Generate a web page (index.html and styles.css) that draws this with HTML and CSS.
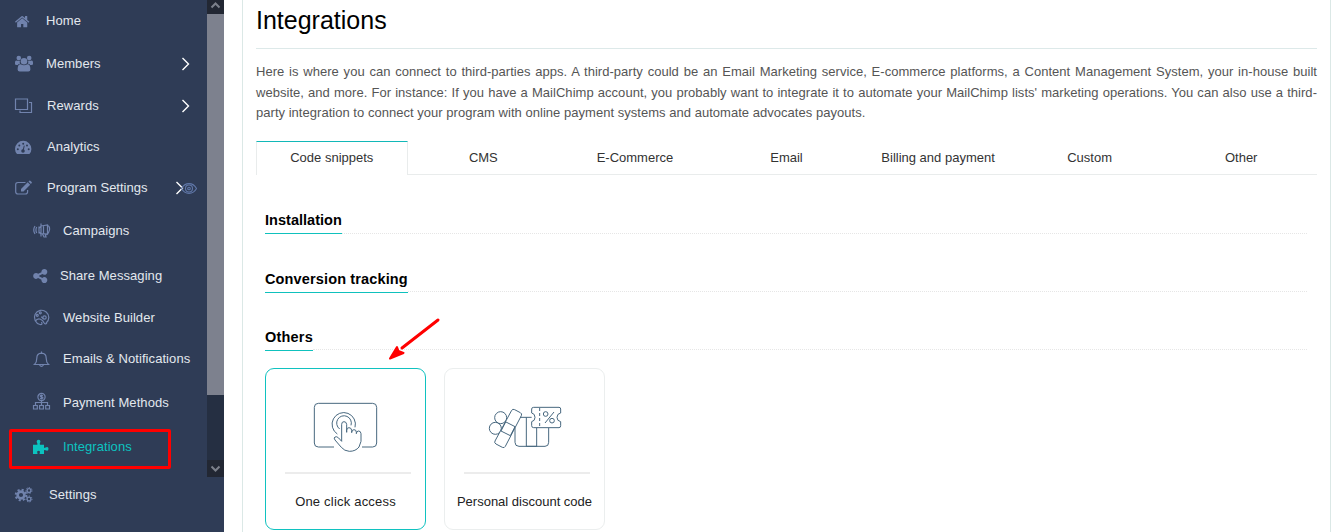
FILE: index.html
```html
<!DOCTYPE html>
<html lang="en">
<head>
<meta charset="utf-8">
<title>Integrations</title>
<link rel="stylesheet" href="styles.css">
</head>
<body>
<div class="app">
  <aside class="sidebar">
    <nav class="nav">
      <a class="item"><svg class="icon solid" viewBox="0 0 20 20"><path transform="translate(.3 2.8) scale(.0088)" d="M1472 992v480q0 26-19 45t-45 19h-384v-384h-256v384h-384q-26 0-45-19t-19-45v-480q0-1 .5-3t.5-3l575-474 575 474q1 2 1 6zm223-69l-62 74q-8 9-21 11h-3q-13 0-21-7l-692-577-692 577q-12 8-24 7-13-2-21-11l-62-74q-8-10-7-23.5t11-21.5l719-599q32-26 76-26t76 26l244 204v-195q0-14 9-23t23-9h192q14 0 23 9t9 23v408l219 182q10 8 11 21.5t-7 23.5z"/></svg><span class="label">Home</span></a>
      <a class="item"><svg class="icon solid" viewBox="0 0 20 20"><circle cx="4.8" cy="5" r="2.3"/><circle cx="15.2" cy="5" r="2.3"/><path d="M1 11V9.500Q1 7.200 3 7.700h3Q5.200 9 6.200 10.800 4.500 10.700 3.800 12H2.500Q1 12 1 11zM19 11V9.500Q19 7.200 17 7.700h-3q.8 1.300-.2 3.100 1.700-.1 2.400 1.200h1.300Q19 12 19 11z"/><circle cx="10" cy="8.200" r="3.300"/><path d="M3.600 16.500q0-5.200 3-5.200 3.400 1.800 6.800 0 3 0 3 5.200 0 2-2 2H5.600q-2 0-2-2z"/></svg><span class="label">Members</span><svg class="chevron" viewBox="0 0 10 14"><path d="M1.500 1 7.500 7l-6 6"/></svg></a>
      <a class="item late"><svg class="icon line" viewBox="0 0 20 20"><path d="M1.500 4h12v10.500h-12zM15 7.500h2.500v10H6V15.500"/></svg><span class="label">Rewards</span><svg class="chevron" viewBox="0 0 10 14"><path d="M1.500 1 7.500 7l-6 6"/></svg></a>
      <a class="item late"><svg class="icon solid" viewBox="0 0 20 20"><path d="M3 18Q1 16 1 13a8.200 8.200 0 0 1 16.400 0q0 3-2 5z"/><g class="cut"><circle cx="3.800" cy="13.300" r="1"/><circle cx="5.300" cy="9.500" r="1"/><circle cx="9.200" cy="7.800" r="1"/><circle cx="13" cy="9.500" r="1"/><circle cx="14.700" cy="13.300" r="1"/><circle cx="9" cy="15" r="1.800"/><path d="m8.600 14 1.300-4.500.8.200-1 4.800z"/></g></svg><span class="label">Analytics</span></a>
      <a class="item late"><svg class="icon line" viewBox="0 0 20 20"><path d="M11.500 4.500H4Q1.700 4.500 1.700 6.700v7.100Q1.700 16 4 16h7.300q2.300 0 2.300-2.200V12"/><path class="fill" d="m7 11 6.700-6.700 2.500 2.500-6.700 6.700H7zM14.500 3.500l.8-.8q.5-.4 1 0l1.400 1.400q.5.500 0 1l-.8.800z"/></svg><span class="label tight">Program Settings</span><svg class="chevron toggle" viewBox="0 0 22 14"><path d="M1.500 1 7.500 7l-6 6"/><g class="eye"><path d="M6.500 7.500C10 1 18 1 21.500 7.500 18 14 10 14 6.500 7.500z"/><circle cx="14" cy="7.500" r="3.500"/><circle cx="14" cy="7.500" r="1.300"/></g></svg></a>
      <a class="item sub"><svg class="icon line" viewBox="0 0 20 20"><path d="M7 5.500v7M7 7.500 9 5V2.500v13L9 13 7 11M9 5l6.500-1v9L9 12.500M11.500 4.500v8M3 5q-2.500 4 0 8M4.700 6q-1.500 3 0 6M10.500 13l1.500 3h2l-1-3M15.500 4.500q2.500.5 2 4.500-.5 3-3 5"/></svg><span class="label">Campaigns</span></a>
      <a class="item sub share"><svg class="icon solid" viewBox="0 0 20 20"><path transform="translate(0 2.700) scale(.0092)" d="M1344 1024q133 0 226.500 93.500t93.500 226.500-93.500 226.500-226.500 93.500-226.500-93.500-93.500-226.500q0-12 2-34l-360-180q-92 86-218 86-133 0-226.500-93.500t-93.500-226.500 93.500-226.500 226.500-93.500q126 0 218 86l360-180q-2-22-2-34 0-133 93.500-226.500t226.500-93.500 226.500 93.500 93.500 226.500-93.500 226.500-226.500 93.500q-126 0-218-86l-360 180q2 22 2 34t-2 34l360 180q92-86 218-86z"/></svg><span class="label">Share Messaging</span></a>
      <a class="item sub"><svg class="icon line" viewBox="0 0 20 20"><path d="M8 16.500A7.200 7.200 0 1 1 14 15.200M3.200 13.500q2-3.500 5.300-2.300 2.500 1 3.500 3.500 1 2 3 .5M8 16.500q3 .5 1.500-2.500"/><circle cx="5.300" cy="7.300" r="1"/><circle cx="8.300" cy="4.800" r="1"/><circle cx="12.500" cy="9.500" r="1.700"/><path d="m11.500 10.700-2.300-2"/></svg><span class="label">Website Builder</span></a>
      <a class="item sub"><svg class="icon line" viewBox="0 0 20 20"><path d="M9.500 2.500v1.700M2.500 15.500q2.300-2 2.300-6.300 0-4.800 4.700-5 4.700.2 4.700 5 0 4.300 2.300 6.300zM7.500 16q2 2.700 4 0"/></svg><span class="label">Emails &amp; Notifications</span></a>
      <a class="item sub"><svg class="icon line" viewBox="0 0 20 20"><circle cx="9.500" cy="5" r="3.600"/><path d="M11 3.700q-2.800-1-2.800.4 0 .8 1.400.9 1.500.2 1.300 1.200-.3 1.200-2.900.1M9.500 2.500v5M9.500 8.600v4.400M3.500 13v-2.500h12V13M1.500 13.500h3.800V17H1.500zM7.600 13.500h3.800V17H7.600zM13.700 13.500h3.800V17h-3.800z"/></svg><span class="label">Payment Methods</span></a>
      <a class="item sub active"><svg class="icon solid" viewBox="0 0 20 20"><path d="M1 7.700h4.200q.7-.6 0-1.500-1-1.600-.2-2.700Q5.600 2.700 6.500 2.700q1 0 1.600.8.800 1.100-.2 2.700-.5.900.2 1.500H12v2.800q.5.800 1.500 0 3-1.200 3 1.300 0 2.700-3 1.500-1-.8-1.500 0V17H7.700q-.4-.6.200-1.500.6-1.600-1.300-1.700-2 .1-1.400 1.700.6.900.2 1.500H1z"/></svg><span class="label">Integrations</span></a>
      <a class="item last"><svg class="icon line" viewBox="0 0 20 20"><circle cx="7" cy="11" r="3.400" stroke-width="2.600"/><circle cx="7" cy="11" r="5.300" stroke-width="2" stroke-dasharray="2.080 2.080"/><circle cx="15" cy="6.500" r="1.900" stroke-width="1.300"/><circle cx="15" cy="6.500" r="3" stroke-width="1" stroke-dasharray="1.350 1.350"/><circle cx="15" cy="15" r="1.900" stroke-width="1.300"/><circle cx="15" cy="15" r="3" stroke-width="1" stroke-dasharray="1.350 1.350"/></svg><span class="label">Settings</span></a>
    </nav>
    <div class="scrollbar">
      <div class="scroll-button"><svg viewBox="0 0 17 14"><path d="m4.500 7.500 4-4 4 4"/></svg></div>
      <div class="thumb"></div>
      <div class="track"></div>
      <div class="scroll-button bottom"><svg viewBox="0 0 17 17"><path d="m4.500 6.500 4 4 4-4"/></svg></div>
    </div>
    <div class="highlight"></div>
  </aside>
  <main class="panel">
    <h1 class="title">Integrations</h1>
    <p class="intro">Here is where you can connect to third-parties apps. A third-party could be an Email Marketing service, E-commerce platforms, a Content Management System, your in-house built website, and more. For instance: If you have a MailChimp account, you probably want to integrate it to automate your MailChimp lists' marketing operations. You can also use a third-party integration to connect your program with online payment systems and automate advocates payouts.</p>
    <div class="tabs">
      <a class="tab selected">Code snippets</a><a class="tab">CMS</a><a class="tab">E-Commerce</a><a class="tab">Email</a><a class="tab">Billing and payment</a><a class="tab">Custom</a><a class="tab">Other</a>
    </div>
    <div class="sections">
      <div class="section"><h2 class="heading narrow">Installation</h2></div>
      <div class="section raised"><h2 class="heading">Conversion tracking</h2></div>
      <div class="section raised"><h2 class="heading even">Others</h2></div>
    </div>
    <div class="cards">
      <a class="card chosen">
        <svg class="art" width="72" height="58" viewBox="165 114 216 174">
          <path d="M237 261h-47q-12 0-12-12V142q0-12 12-12h163q12 0 12 12v107q0 12-12 12h-32"/>
          <path d="M247 222a35 35 0 1 1 53-20M254 207a22 22 0 1 1 34-11"/>
          <path d="M260 244V193q0-8 7-8t8 8v24V211q0-8 7-8t8 8v7q0-9 7-9t7 8v4q0-8 7-8 6 0 7 8 3 26-6 40-10 13-29 13-15-1-24-12l-19-22q-5-7 0-9 5-3 11 3z"/>
        </svg>
        <span class="rule"></span>
        <span class="caption wide">One click access</span>
      </a>
      <a class="card">
        <svg class="art" width="80" height="58" viewBox="150 114 240 174">
          <circle cx="197" cy="173" r="18"/><circle cx="181" cy="205" r="18"/>
          <path class="paper" d="M230 151q3-5 9-2l17 9q6 3 3 9l-48 92q-3 6-9 3l-19-10q-6-3-3-9zM211 185l29 15M198 213l28 14"/>
          <path d="M212 186 198 213M240 200l-14 27M255 172h35M240 203v44q0 12 12 12h78q11 0 11-12v-43M274 172v87h31v-56"/>
          <path class="paper" d="M296 142h76q5 0 5 5v12q-11 2-11 13t11 13v12q0 6-5 6h-76q-6 0-6-6v-12q10-2 10-13t-10-13v-12q0-5 6-5z"/>
          <path d="M314 144v56" stroke-dasharray="9 6"/><path d="m357 156-27 33"/><circle cx="332" cy="162" r="7"/><circle cx="351" cy="182" r="7"/>
        </svg>
        <span class="rule"></span>
        <span class="caption">Personal discount code</span>
      </a>
    </div>
    <svg class="pointer" width="54" height="46" viewBox="0 0 54 46"><path class="shaft" d="M49 5 13 33"/><path class="head" d="m1 43.500 7-11.500 1.500 4 5 2z"/></svg>
  </main>
</div>
</body>
</html>
```

FILE: styles.css
```css
* { box-sizing: border-box; }
body {
  margin: 0;
  background: #fff;
  font-family: "Liberation Sans", Arial, sans-serif;
  font-size: 13px;
  color: #333;
}
.app { display: flex; height: 532px; overflow: hidden; }

.sidebar { position: relative; display: flex; width: 224px; background: #2f3c56; }
.nav {
  display: grid;
  width: 207px;
  grid-template-rows: 41px 44px 40px 42px 41px 45px 44px 41px 41px 46px 43px 52px;
  align-content: start;
}
.item { display: flex; align-items: center; padding-left: 14px; color: #e3e8ee; letter-spacing: .07px; }
.icon { width: 20px; height: 20px; flex: none; color: #7183ad; }
.solid { fill: currentColor; }
.line { fill: none; stroke: currentColor; stroke-width: 1.2; }
.cut { fill: #2f3c56; }
.fill { fill: currentColor; stroke: none; }
.label { margin-left: 12px; white-space: nowrap; }
.late .label { margin-left: 13px; }
.last .label { margin-left: 15px; }
.item .tight { letter-spacing: 0; }
.sub { padding-left: 32px; }
.sub .label { margin-left: 11px; }
.share .label { margin-left: 8px; }
.active, .active .icon { color: #0cc3c0; }
.chevron { width: 10px; height: 14px; margin: 1px 16px 0 auto; fill: none; stroke: #fff; stroke-width: 1.4; }
.toggle { width: 22px; margin-right: 10px; }
.eye { stroke: #6077a8; stroke-width: 1.1; }

.scrollbar { display: flex; flex-direction: column; width: 17px; height: 477px; background: #252f42; }
.scroll-button { height: 14px; background: #222733; fill: none; stroke: #7c808b; stroke-width: 2; }
.scroll-button svg { display: block; }
.bottom { height: 17px; }
.thumb { height: 381px; background: #7d818e; }
.track { flex: 1; }
.highlight {
  position: absolute;
  left: 9px;
  top: 429px;
  width: 162px;
  height: 40px;
  border: 3px solid #f00;
  border-radius: 2px;
}

.panel {
  position: relative;
  width: 1089px;
  margin-left: 18px;
  padding: 0 13px;
  border: solid #dbe8e6;
  border-width: 0 1px;
}
.title {
  height: 49px;
  margin: 0;
  border-bottom: 1px solid #dde9e9;
  color: #000;
  font-size: 25px;
  font-weight: 400;
  line-height: 41px;
}
.intro {
  height: 79px;
  margin: 13px 0 0;
  color: #555;
  line-height: 20.6px;
  letter-spacing: .03px;
  text-align: justify;
}
.tabs { display: grid; grid-template-columns: repeat(7, 1fr); height: 34px; }
.tab { border-bottom: 1px solid #e9ecec; line-height: 33px; text-align: center; }
.selected { border: 1px solid #e9ecec; border-top-color: #12b8b8; border-bottom: 0; line-height: 32px; }
.sections { padding: 33px 10px 0 9px; }
.section { display: flex; height: 58.500px; align-items: flex-start; }
.section::after { content: ""; flex: 1; margin-top: 25px; border-top: 1px dotted #e6e6e6; }
.raised::after { margin-top: 24px; }
.heading {
  height: 26px;
  margin: 0;
  border-bottom: 1px solid #0fc1bd;
  color: #000;
  font-size: 14.500px;
  line-height: 24px;
  letter-spacing: .14px;
}
.narrow { line-height: 25px; letter-spacing: .03px; }
.even { line-height: 25px; letter-spacing: .2px; }
.cards { display: flex; gap: 18px; margin-top: -16px; padding-left: 9px; }
.card {
  display: flex;
  flex-direction: column;
  align-items: center;
  width: 161px;
  height: 162px;
  padding-top: 29px;
  border: 1px solid #ebeeee;
  border-radius: 9px;
}
.chosen { border-color: #10c2c0; }
.art { fill: none; stroke: #48687f; stroke-width: 3; }
.paper { fill: #fff; }
.rule { width: 126px; height: 2px; margin: 16px 0 0 4px; background: #ececec; }
.caption { margin-top: 20px; color: #222; white-space: nowrap; }
.wide { letter-spacing: .2px; }

.pointer { position: absolute; left: 146px; top: 315px; }
.shaft { stroke: #f00; stroke-width: 3; stroke-linecap: round; }
.head { fill: #f00; stroke: #f00; stroke-width: 2; stroke-linejoin: round; }
```
